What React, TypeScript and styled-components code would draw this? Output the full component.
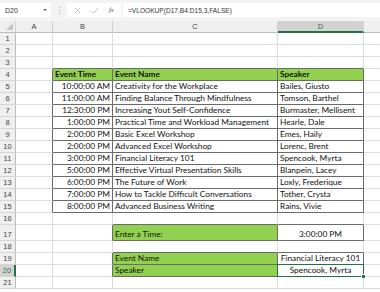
import styled, { createGlobalStyle } from "styled-components";

const GlobalStyle = createGlobalStyle`
  html, body {
    margin: 0;
    padding: 0;
    background: #ffffff;
    overflow: hidden;
  }
  body {
    font-family: Lato, "Liberation Sans", sans-serif;
  }
`

const COLS = [16, 37, 60, 165, 86, 40]
const GRID = COLS.map((w) => `${w}px`).join(" ")
const GREEN = "#92d050"
const DARK = "#6b6b6b"
const LIGHT = "#dcdcdc"
const ACCENT = "#217346"

const Sheet = styled.div`
  width: 380px;
  height: 292px;
  overflow: hidden;
  display: flex;
  flex-direction: column;
  background: #ffffff;
`

const FormulaBar = styled.div`
  height: 21px;
  flex: none;
  background: #f3f3f3;
  display: flex;
  align-items: flex-start;
  padding-top: 3px;
  box-sizing: border-box;
`

const NameBox = styled.div`
  width: 51px;
  height: 14px;
  background: #ffffff;
  box-sizing: border-box;
  display: flex;
  align-items: center;
  justify-content: space-between;
  padding: 0 4px 0 5px;
  font-family: "Liberation Sans", Arial, sans-serif;
  font-size: 7px;
  color: #333;
`

const Caret = styled.span`
  width: 0;
  height: 0;
  border-left: 2px solid transparent;
  border-right: 2px solid transparent;
  border-top: 2px solid #666;
`

const Dots = styled.div`
  width: 16px;
  height: 14px;
  display: flex;
  flex-direction: column;
  align-items: center;
  justify-content: center;
  gap: 2px;
  span {
    width: 1px;
    height: 1px;
    background: #aaa;
  }
`

const IconBox = styled.div`
  width: 54px;
  height: 14px;
  background: #ffffff;
  display: flex;
  align-items: center;
  justify-content: space-around;
  padding: 0 2px;
  box-sizing: border-box;
`

const Fx = styled.span`
  font-family: "Liberation Serif", serif;
  font-style: italic;
  font-size: 7px;
  color: #555;
`

const FormulaText = styled.div`
  flex: 1;
  height: 14px;
  margin-left: 2px;
  background: #ffffff;
  display: flex;
  align-items: center;
  padding-left: 5px;
  font-family: "Liberation Sans", Arial, sans-serif;
  font-size: 6.6px;
  color: #333;
`

const Row = styled.div<{ $h: number }>`
  display: grid;
  grid-template-columns: ${GRID};
  height: ${(p) => p.$h}px;
  flex: none;
`

const ColHead = styled.div<{ $sel?: boolean }>`
  background: ${(p) => (p.$sel ? "#d2d2d2" : "#efefef")};
  color: ${(p) => (p.$sel ? ACCENT : "#444")};
  border-right: 1px solid #d0d0d0;
  border-bottom: ${(p) => (p.$sel ? `2px solid ${ACCENT}` : "1px solid #bdbdbd")};
  box-sizing: border-box;
  display: flex;
  align-items: center;
  justify-content: center;
  font-family: "Liberation Sans", Arial, sans-serif;
  font-size: 7.5px;
  position: relative;
`

const Corner = styled(ColHead)`
  &::after {
    content: "";
    position: absolute;
    right: 2px;
    bottom: 2px;
    width: 0;
    height: 0;
    border-left: 7px solid transparent;
    border-bottom: 7px solid #c4c4c4;
  }
`

const RowHead = styled.div<{ $sel?: boolean }>`
  background: ${(p) => (p.$sel ? "#d2d2d2" : "#efefef")};
  color: ${(p) => (p.$sel ? ACCENT : "#444")};
  border-right: ${(p) => (p.$sel ? `2px solid ${ACCENT}` : "1px solid #bdbdbd")};
  border-bottom: 1px solid #d6d6d6;
  box-sizing: border-box;
  display: flex;
  align-items: flex-end;
  justify-content: center;
  padding-bottom: 1px;
  font-family: "Liberation Sans", Arial, sans-serif;
  font-size: 7.5px;
  line-height: 9px;
`

const Cell = styled.div<{
  $fill?: string
  $bold?: boolean
  $align?: string
  $rDark?: boolean
  $bDark?: boolean
  $sel?: boolean
}>`
  background: ${(p) => p.$fill || "#ffffff"};
  border-right: 1px solid ${(p) => (p.$rDark ? DARK : LIGHT)};
  border-bottom: 1px solid ${(p) => (p.$bDark ? DARK : LIGHT)};
  box-sizing: border-box;
  display: flex;
  align-items: flex-end;
  justify-content: ${(p) =>
    p.$align === "right" ? "flex-end" : p.$align === "center" ? "center" : "flex-start"};
  padding: 0 2px 1px 2px;
  font-size: 8.3px;
  line-height: 10px;
  font-weight: ${(p) => (p.$bold ? 700 : 400)};
  color: #111;
  white-space: nowrap;
  overflow: visible;
  position: relative;
  ${(p) =>
    p.$sel &&
    `
    &::after {
      content: "";
      position: absolute;
      left: -1px;
      top: -1px;
      right: -1px;
      bottom: -1px;
      border: 1px solid ${ACCENT};
    }
    &::before {
      content: "";
      position: absolute;
      right: -3px;
      bottom: -3px;
      width: 3px;
      height: 3px;
      background: ${ACCENT};
      border: 1px solid #fff;
      z-index: 2;
    }
  `}
`

type CellData = { text?: string; fill?: string; bold?: boolean; align?: string }

const events: [string, string, string][] = [
  ["10:00:00 AM", "Creativity for the Workplace", "Bailes, Giusto"],
  ["11:00:00 AM", "Finding Balance Through Mindfulness", "Tomson, Barthel"],
  ["12:30:00 PM", "Increasing Yout Self-Confidence", "Burmaster, Mellisent"],
  ["1:00:00 PM", "Practical Time and Workload Management", "Hearle, Dale"],
  ["2:00:00 PM", "Basic Excel Workshop", "Emes, Haily"],
  ["2:00:00 PM", "Advanced Excel Workshop", "Lorenc, Brent"],
  ["3:00:00 PM", "Financial Literacy 101", "Spencook, Myrta"],
  ["5:00:00 PM", "Effective Virtual Presentation Skills", "Blanpein, Lacey"],
  ["6:00:00 PM", "The Future of Work", "Loxly, Frederique"],
  ["7:00:00 PM", "How to Tackle Difficult Conversations", "Tother, Crysta"],
  ["8:00:00 PM", "Advanced Business Writing", "Rains, Vivie"],
]

// rows 1..21, columns A..E
const rows: CellData[][] = []
for (let r = 1; r <= 21; r++) rows.push([{}, {}, {}, {}, {}])
rows[3][1] = { text: "Event Time", fill: GREEN, bold: true }
rows[3][2] = { text: "Event Name", fill: GREEN, bold: true }
rows[3][3] = { text: "Speaker", fill: GREEN, bold: true }
events.forEach(([t, n, s], i) => {
  rows[4 + i][1] = { text: t, align: "right" }
  rows[4 + i][2] = { text: n }
  rows[4 + i][3] = { text: s }
})
rows[16][2] = { text: "Enter a Time:", fill: GREEN }
rows[16][3] = { text: "3:00:00 PM", align: "center" }
rows[18][2] = { text: "Event Name", fill: GREEN }
rows[18][3] = { text: "Financial Literacy 101", align: "center" }
rows[19][2] = { text: "Speaker", fill: GREEN }
rows[19][3] = { text: "Spencook, Myrta", align: "center" }

const boxed = (r: number, c: number) => {
  if (r >= 4 && r <= 15 && c >= 1 && c <= 3) return true
  if (r === 17 && (c === 2 || c === 3)) return true
  if ((r === 19 || r === 20) && (c === 2 || c === 3)) return true
  return false
}

const rowHeight = (r: number) => (r === 17 ? 16 : 12)

export default function App() {
  return (
    <Sheet>
      <GlobalStyle />
      <FormulaBar>
        <NameBox>
          D20
          <Caret />
        </NameBox>
        <Dots>
          <span />
          <span />
          <span />
        </Dots>
        <IconBox>
          <svg width="7" height="7" viewBox="0 0 7 7">
            <path d="M1 1 L6 6 M6 1 L1 6" stroke="#b5b5b5" strokeWidth="0.8" />
          </svg>
          <svg width="8" height="7" viewBox="0 0 8 7">
            <path d="M1 4 L3 6 L7 1" stroke="#b5b5b5" strokeWidth="0.8" fill="none" />
          </svg>
          <Fx>fx</Fx>
        </IconBox>
        <FormulaText>=VLOOKUP(D17,B4:D15,3,FALSE)</FormulaText>
      </FormulaBar>
      <Row $h={12}>
        <Corner />
        <ColHead>A</ColHead>
        <ColHead>B</ColHead>
        <ColHead>C</ColHead>
        <ColHead $sel>D</ColHead>
        <ColHead />
      </Row>
      {rows.map((cells, i) => {
        const r = i + 1
        return (
          <Row key={r} $h={rowHeight(r)}>
            <RowHead $sel={r === 20}>{r}</RowHead>
            {cells.map((cell, c) => (
              <Cell
                key={c}
                $fill={cell.fill}
                $bold={cell.bold}
                $align={cell.align}
                $rDark={boxed(r, c) || boxed(r, c + 1)}
                $bDark={boxed(r, c) || boxed(r + 1, c)}
                $sel={r === 20 && c === 3}
              >
                {cell.text}
              </Cell>
            ))}
          </Row>
        )
      })}
    </Sheet>
  )
}
